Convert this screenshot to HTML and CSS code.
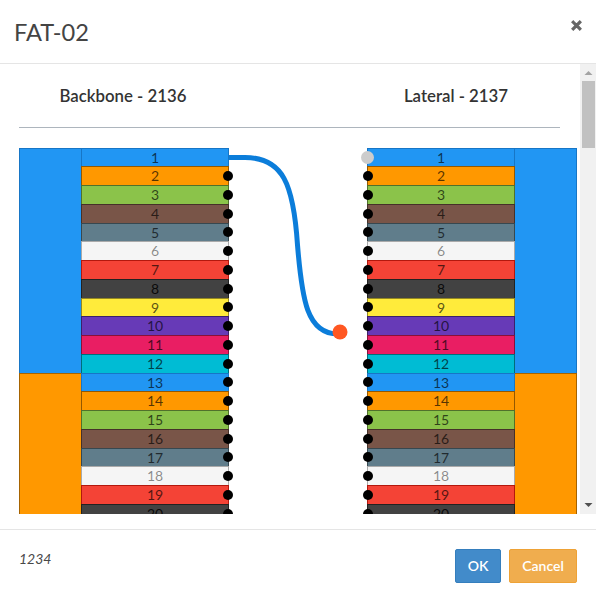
FILE: index.html
```
<!DOCTYPE html>
<html lang="en">
<head>
<meta charset="utf-8">
<title>FAT-02</title>
<link rel="stylesheet" href="styles.css">
</head>
<body>
<div class="dialog">
  <header class="dialog-header">
    <h1 class="dialog-title">FAT-02</h1>
    <button class="close" aria-label="Close">
      <svg width="11" height="11" viewBox="0 0 11 11"><path d="M2.3 2.3 8.7 8.7M8.7 2.3 2.3 8.7"/></svg>
    </button>
  </header>
  <div class="dialog-body">
    <main class="content">
      <div class="headings">
        <h2 class="heading">Backbone - 2136</h2>
        <h2 class="heading heading-right">Lateral - 2137</h2>
      </div>
      <div class="diagram">
        <section class="cable cable-left">
          <div class="tubes"><div class="tube blue"></div><div class="tube orange"></div></div>
          <div class="fibers"></div>
        </section>
        <section class="cable cable-right">
          <div class="fibers"></div>
          <div class="tubes"><div class="tube blue"></div><div class="tube orange"></div></div>
        </section>
        <svg class="splice" width="130" height="200" viewBox="228 148 130 200">
          <path d="M229 157.5H245C283 157.5 293.5 184 297.5 245C302 300 307 334 338 334"/>
          <circle cx="340" cy="332" r="7.5"/>
        </svg>
      </div>
    </main>
    <div class="scrollbar">
      <svg class="arrow arrow-up" width="16" height="17" viewBox="0 0 16 17"><path d="M4.5 11 8.5 7 12.5 11z"/></svg>
      <div class="thumb"></div>
      <svg class="arrow arrow-down" width="16" height="17" viewBox="0 0 16 17"><path d="M4.5 6 8.5 10 12.5 6z"/></svg>
    </div>
  </div>
  <footer class="dialog-footer">
    <em class="note">1234</em>
    <div class="actions">
      <button class="btn btn-ok">OK</button>
      <button class="btn btn-cancel">Cancel</button>
    </div>
  </footer>
</div>
<script src="fibers.js"></script>
</body>
</html>
```
FILE: styles.css
```
* { box-sizing: border-box; }
body {
  margin: 0;
  background: #fff;
  color: #333;
  font-family: Lato, "Open Sans", sans-serif;
  font-size: 14px;
}
.dialog {
  display: flex;
  flex-direction: column;
  height: 601px;
  overflow: hidden;
}
.dialog-header {
  display: flex;
  justify-content: space-between;
  height: 64px;
  padding: 0 14px 0 14px;
  border-bottom: 1px solid #e5e5e5;
}
.dialog-title {
  margin: 0;
  color: #444;
  font-size: 23.6px;
  font-weight: 400;
  line-height: 64px;
}
.close {
  width: 11px;
  height: 11px;
  margin-top: 20px;
  padding: 0;
  border: 0;
  background: none;
}
.close svg { display: block; }
.close path {
  stroke: #666;
  stroke-width: 3.2;
  stroke-linecap: square;
}
.dialog-body {
  display: flex;
  height: 450px;
}
.content {
  width: 580px;
  height: 450px;
  padding-left: 19px;
  overflow: hidden;
}
.headings {
  display: flex;
  width: 541px;
  height: 64px;
  border-bottom: 1px solid #adb5bd;
}
.heading {
  width: 208px;
  margin: 0;
  font-size: 16.8px;
  font-weight: 600;
  line-height: 64px;
  text-align: center;
}
.heading-right { margin-left: 125px; }
.diagram {
  position: relative;
  display: flex;
  justify-content: space-between;
  width: 558px;
  margin-top: 19.5px;
}
.cable { display: flex; }
.tubes { width: 62px; }
.tube {
  height: 225px;
  border: solid rgba(0, 0, 0, .35);
  border-width: 1px 0 0 1px;
}
.cable-right .tube { border-width: 1px 1px 0 0; }
.fibers { width: 148px; }
.fiber {
  position: relative;
  height: 18.75px;
  border: solid rgba(0, 0, 0, .42);
  border-width: 1px 1px 0;
  color: rgba(0, 0, 0, .67);
  font-size: 14px;
  font-weight: 400;
  line-height: 17px;
  text-align: center;
}
.port {
  position: absolute;
  top: 3.9px;
  width: 10px;
  height: 10px;
  border-radius: 50%;
  background: #000;
}
.cable-left .port { right: -5.3px; }
.cable-right .port { left: -5.3px; }
.cable-right .port.hover {
  top: 2px;
  left: -6.7px;
  width: 13px;
  height: 13px;
  background: #ccc;
}
.blue { background: #2196f3; border-color: #1776c6; }
.orange { background: #ff9800; }
.green { background: #8bc34a; }
.brown { background: #795548; }
.slate { background: #607d8b; }
.white { background: #f5f5f5; border-color: #aaa; color: rgba(0, 0, 0, .45); }
.red { background: #f44336; border-color: #b3180d; }
.black { background: #424242; border-color: #222; color: rgba(0, 0, 0, .85); }
.yellow { background: #ffeb3b; }
.violet { background: #673ab7; }
.rose { background: #e91e63; }
.aqua { background: #00bcd4; }
.splice {
  position: absolute;
  top: .5px;
  left: 209px;
}
.splice path {
  fill: none;
  stroke: #0b7dda;
  stroke-width: 5;
}
.splice circle { fill: #ff5722; }
.scrollbar {
  display: flex;
  flex-direction: column;
  width: 16px;
  background: #f1f1f1;
}
.arrow { display: block; }
.arrow-up { fill: #a3a3a3; }
.arrow-down { margin-top: auto; fill: #505050; }
.thumb {
  width: 13px;
  height: 67px;
  margin-left: 2px;
  background: #c1c1c1;
}
.dialog-footer {
  display: flex;
  justify-content: space-between;
  height: 72px;
  margin-top: 15px;
  padding: 19px;
  border-top: 1px solid #e5e5e5;
}
.note { color: #484848; line-height: 20px; font-size: 14px; }
.actions { display: flex; gap: 8px; }
.btn {
  height: 34px;
  padding: 0;
  border: 1px solid;
  border-radius: 2px;
  color: #fff;
  font: 600 14px/32px Lato, sans-serif;
}
.btn-ok { width: 46px; background: #428bca; border-color: #357ebd; }
.btn-cancel { width: 68px; background: #f0ad4e; border-color: #eea236; }
```
FILE: fibers.js
```
const colors = ["blue", "orange", "green", "brown", "slate", "white",
  "red", "black", "yellow", "violet", "rose", "aqua"];

document.querySelectorAll(".fibers").forEach((column, side) => {
  for (let n = 1; n <= 20; n++) {
    const fiber = document.createElement("div");
    fiber.className = "fiber " + colors[(n - 1) % 12];
    fiber.textContent = n;
    // The spliced backbone fiber has the cable in place of its port.
    if (side === 1 || n > 1) {
      const port = document.createElement("span");
      port.className = n === 1 ? "port hover" : "port";
      fiber.append(port);
    }
    column.append(fiber);
  }
});
```
